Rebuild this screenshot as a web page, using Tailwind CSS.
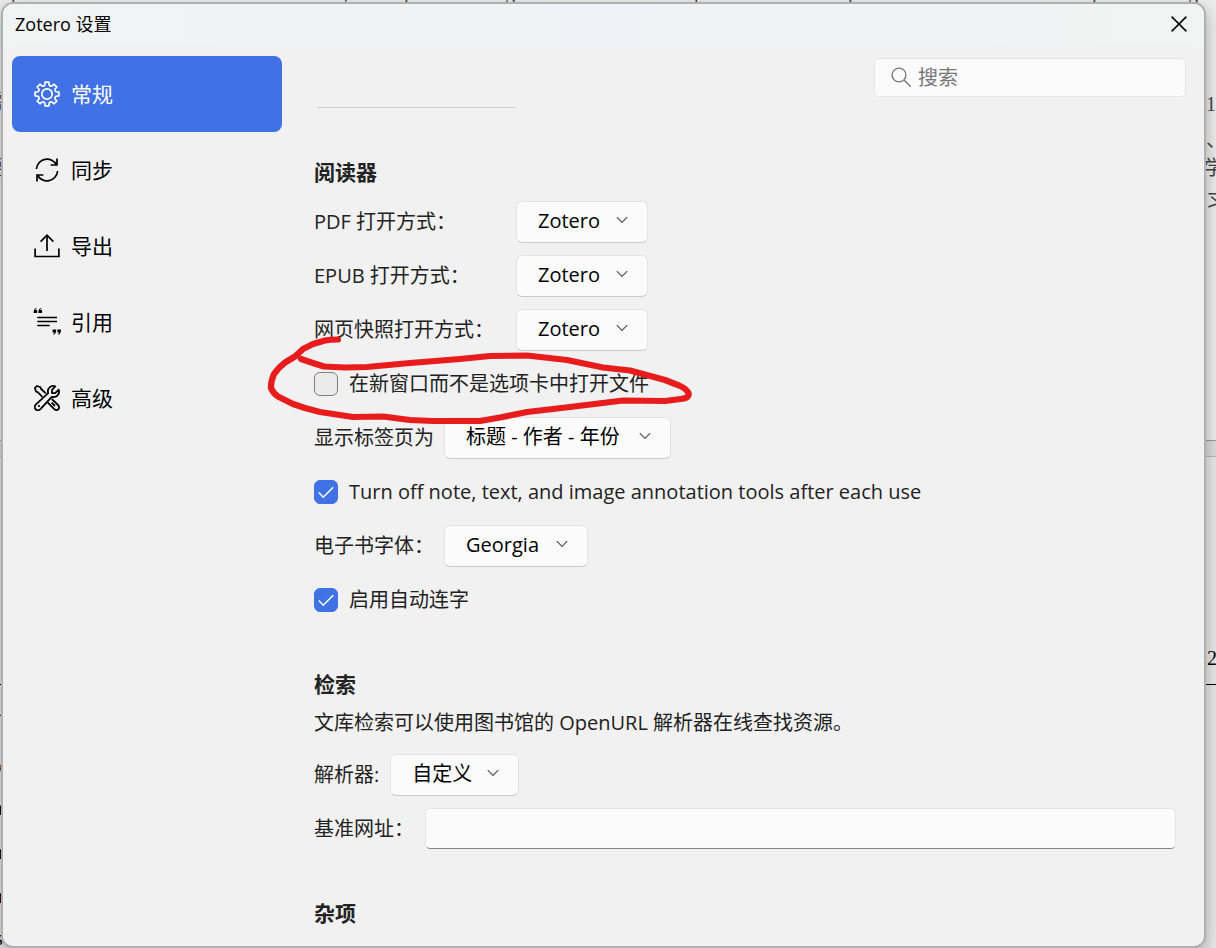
<!DOCTYPE html>
<html lang="zh-CN">
<head>
<meta charset="utf-8">
<meta name="viewport" content="width=device-width, initial-scale=1">
<title>Zotero 设置</title>
<script src="https://cdn.jsdelivr.net/npm/@tailwindcss/browser@4"></script>
</head>
<body class="relative h-screen overflow-hidden bg-[#e9e9e9] font-['Open_Sans','Noto_Sans_CJK_SC',sans-serif] text-[#222]">

<!-- Document pages behind the dialog -->
<div class="absolute inset-0 flex flex-col overflow-hidden font-['Liberation_Serif','Noto_Sans_CJK_SC',serif] text-xl leading-6 text-[#444]" aria-hidden="true">
  <div class="h-[441px] border-b border-[#999] bg-[#ececec]"></div>
  <div class="h-[15px] bg-[#dcdcdc]"></div>
  <div class="grow border-t border-[#bbb] bg-[#e8e8e8]"></div>
  <span class="absolute left-[11px] -top-[19px]">p</span>
  <span class="absolute left-[343px] -top-[19px]">,</span>
  <span class="absolute left-[404px] -top-[19px]">p</span>
  <span class="absolute left-[505px] -top-[19px]">g</span>
  <span class="absolute left-[694px] -top-[19px]">p</span>
  <span class="absolute left-[848px] -top-[19px]">p</span>
  <span class="absolute left-[1092px] -top-[19px]">p</span>
  <span class="absolute left-[1188px] -top-[19px]">g</span>
  <span class="absolute left-[1206px] top-[92px]">1</span>
  <span class="absolute left-[1206px] top-[128px]">、</span>
  <span class="absolute left-[1204px] top-[156px]">学</span>
  <span class="absolute left-[1206px] top-[190px]">习</span>
  <span class="absolute left-[1207px] top-[646px] text-black">2</span>
  <span class="absolute -left-[17px] top-[90px]">需</span>
  <span class="absolute -left-[17px] top-[156px]">要</span>
  <span class="absolute -left-[17px] top-[710px]">言</span>
  <span class="absolute -left-[7px] top-[756px] text-black">y</span>
  <span class="absolute -left-[6px] top-[796px] text-black">a</span>
  <span class="absolute -left-[7px] top-[840px] text-black">n</span>
  <span class="absolute -left-[7px] top-[884px] text-black">n</span>
  <span class="absolute -left-[5px] top-[926px] text-black">s</span>
  <div class="absolute inset-x-0 top-[684px] h-px bg-black"></div>
</div>

<div class="relative h-full pt-[2px] pr-[10px] pl-px">
  <div class="flex h-full flex-col overflow-hidden rounded-[12px] border-2 border-[#b0b0b0] bg-[#f1f1f1] shadow-[0_6px_16px_rgba(0,0,0,0.3)]">

    <header class="flex h-[43px] shrink-0 items-center justify-between bg-linear-to-r from-[#f1f4f3] via-[#f0f2f7] to-[#f1f4f2] pr-4 pb-[3px] pl-3 text-black">
      <h1 class="text-lg leading-6">Zotero 设置</h1>
      <button type="button" aria-label="关闭" class="grid size-[18px] place-items-center">
        <svg class="size-4" viewBox="0 0 16 16" fill="none" stroke="currentColor" stroke-width="1.5"><path d="M.6 .6 15.4 15.4M15.4 .6 .6 15.4"/></svg>
      </button>
    </header>

    <div class="flex min-h-0 grow">
      <nav class="flex w-[279px] shrink-0 flex-col pt-[9px] pl-[9px] text-[21px] leading-8 text-black">
        <a href="#general" aria-current="page" class="flex h-[76px] items-center gap-[11px] rounded-lg bg-[#4072e5] pl-[22px] text-white">
          <svg class="size-[26px] shrink-0" viewBox="-13 -13 26 26" fill="none" stroke="currentColor" stroke-width="1.7" stroke-linejoin="round"><path d="M-2.25-9-1.9-11.9H1.9L2.25-9Q3-7.5 4.77-7.95L7.07-9.76 9.76-7.07 7.95-4.77Q7.5-3 9-2.25L11.9-1.9V1.9L9 2.25Q7.5 3 7.95 4.77L9.76 7.07 7.07 9.76 4.77 7.95Q3 7.5 2.25 9L1.9 11.9H-1.9L-2.25 9Q-3 7.5-4.77 7.95L-7.07 9.76-9.76 7.07-7.95 4.77Q-7.5 3-9 2.25L-11.9 1.9V-1.9L-9-2.25Q-7.5-3-7.95-4.77L-9.76-7.07-7.07-9.76-4.77-7.95Q-3-7.5-2.25-9Z"/><circle r="5.2"/></svg>
          常规
        </a>
        <a href="#sync" class="flex h-[76px] items-center gap-[11px] pl-[22px]">
          <svg class="size-[26px] shrink-0" viewBox="-13 -13 26 26" fill="none" stroke="currentColor" stroke-width="1.7"><path d="M-10.6-1A10.7 10.7 0 0 1 9.6-5M10-11.4V-5H3.6M10.6 1A10.7 10.7 0 0 1-9.6 5M-10 11.4V5H-3.6"/></svg>
          同步
        </a>
        <a href="#export" class="flex h-[76px] items-center gap-[11px] pl-[22px]">
          <svg class="size-[26px] shrink-0" viewBox="-13 -13 26 26" fill="none" stroke="currentColor" stroke-width="1.7"><path d="M-11.9 2.6V10.5H11.9V2.6M0 5V-10.6M-6.4-4.4 0-10.8 6.4-4.4"/></svg>
          导出
        </a>
        <a href="#cite" class="flex h-[76px] items-center gap-[11px] pl-[22px]">
          <svg class="size-[26px] shrink-0 overflow-visible" viewBox="-13 -13 26 26" fill="none" stroke="currentColor" stroke-width="1.7"><path d="M-9.7-4.5H10M-9.7-.5H10M-9.7 3.5H2.7"/><path fill="currentColor" stroke="none" d="M-10.4-14.2C-12.6-13.6-13.4-12-13.4-9H-9.8V-12H-11.6Q-11.5-13.2-10.4-13.5ZM-5.6-14.2C-7.8-13.6-8.6-12-8.6-9H-5V-12H-6.8Q-6.7-13.2-5.6-13.5ZM6.2 12.8C8.4 12.2 9.2 10.6 9.2 7.4H5.6V10.4H7.4Q7.3 11.7 6.2 12.1ZM11 12.8C13.2 12.2 14 10.6 14 7.4H10.4V10.4H12.2Q12.1 11.7 11 12.1Z"/></svg>
          引用
        </a>
        <a href="#advanced" class="flex h-[76px] items-center gap-[11px] pl-[22px]">
          <svg class="size-[26px] shrink-0" viewBox="-13 -13 26 26" fill="none" stroke="currentColor" stroke-width="1.8" stroke-linejoin="round"><path d="M8.3-11.7C4-13.2-.3-9.5 1.2-4.8L-11.3 6.6C-12.7 8.2-12.4 10.3-11.3 11.3-10 12.6-7.8 12.4-6.6 11.2L4.8-1.2C9.5.3 13.2-4 11.7-8.3L8.2-4.8 5-5V-8.2Z"/><path d="M-4.6-1-9-5.6-11-6.6-12.1-10-10.2-12-6.8-11-5.8-9-1.2-4.6M.6 4.4 7 10.9C8.3 12.4 10.3 12.4 11.3 11.3 12.4 10.3 12.4 8.3 11 7L4.8 1M4.6 4.6 8 8"/><circle cx="-8" cy="8" r="1.1" fill="currentColor" stroke="none"/></svg>
          高级
        </a>
      </nav>

      <div class="flex min-w-0 grow flex-col">
        <div class="flex justify-end pt-[11px] pr-[18px]">
          <label class="flex h-[39px] w-[312px] items-center gap-[6px] rounded-[5px] border border-[#e5e5e5] bg-[#fbfbfb] px-4 text-[#777]">
            <svg class="size-[21px] shrink-0" viewBox="0 0 21 21" fill="none" stroke="currentColor" stroke-width="1.4"><circle cx="8" cy="8" r="6.9"/><path d="m13 13 6.8 6.8"/></svg>
            <input type="search" placeholder="搜索" aria-label="搜索" class="min-w-0 grow bg-transparent text-xl leading-7 outline-none placeholder:text-[#777]">
          </label>
        </div>

        <main class="flex flex-col pr-7 pl-8 text-xl leading-7">
          <hr class="mt-[10px] ml-[3px] w-[199px] border-[#cdcdcd]">

          <section class="mt-12">
            <h2 class="text-[21px] leading-8 font-bold">阅读器</h2>
            <div class="mt-[13px] flex flex-col gap-3">
              <div class="grid grid-cols-[202px_auto] items-center justify-start gap-y-3">
                <label for="pdf">PDF 打开方式：</label>
                <div class="grid w-[132px] items-center">
                  <select id="pdf" class="col-start-1 row-start-1 h-[42px] appearance-none rounded-md border border-[#e3e3e3] border-b-[#cacaca] bg-[#fbfbfb] pr-10 pb-[2px] pl-[21px] text-black"><option>Zotero</option></select>
                  <svg class="pointer-events-none col-start-1 row-start-1 mr-5 mb-1 h-2 w-3 justify-self-end" viewBox="0 0 12 8" fill="none" stroke="#555" stroke-width="1.2"><path d="M.8 1.2 6 6.4l5.200-5.200"/></svg>
                </div>
                <label for="epub">EPUB 打开方式：</label>
                <div class="grid w-[132px] items-center">
                  <select id="epub" class="col-start-1 row-start-1 h-[42px] appearance-none rounded-md border border-[#e3e3e3] border-b-[#cacaca] bg-[#fbfbfb] pr-10 pb-[2px] pl-[21px] text-black"><option>Zotero</option></select>
                  <svg class="pointer-events-none col-start-1 row-start-1 mr-5 mb-1 h-2 w-3 justify-self-end" viewBox="0 0 12 8" fill="none" stroke="#555" stroke-width="1.2"><path d="M.8 1.2 6 6.4l5.200-5.200"/></svg>
                </div>
                <label for="snapshot">网页快照打开方式：</label>
                <div class="grid w-[132px] items-center">
                  <select id="snapshot" class="col-start-1 row-start-1 h-[42px] appearance-none rounded-md border border-[#e3e3e3] border-b-[#cacaca] bg-[#fbfbfb] pr-10 pb-[2px] pl-[21px] text-black"><option>Zotero</option></select>
                  <svg class="pointer-events-none col-start-1 row-start-1 mr-5 mb-1 h-2 w-3 justify-self-end" viewBox="0 0 12 8" fill="none" stroke="#555" stroke-width="1.2"><path d="M.8 1.2 6 6.4l5.200-5.200"/></svg>
                </div>
              </div>

              <label class="flex h-[42px] items-center gap-[11px]">
                <input type="checkbox" class="size-6 shrink-0 appearance-none rounded-md border border-[#808080] bg-[#ebebeb]">
                在新窗口而不是选项卡中打开文件
              </label>

              <div class="grid grid-cols-[130px_auto] items-center justify-start">
                <label for="tab-title" class="whitespace-nowrap">显示标签页为</label>
                <div class="grid w-[227px] items-center">
                  <select id="tab-title" class="col-start-1 row-start-1 h-[42px] appearance-none rounded-md border border-[#e3e3e3] border-b-[#cacaca] bg-[#fbfbfb] pr-10 pb-[2px] pl-[21px] text-black"><option>标题 - 作者 - 年份</option></select>
                  <svg class="pointer-events-none col-start-1 row-start-1 mr-5 mb-1 h-2 w-3 justify-self-end" viewBox="0 0 12 8" fill="none" stroke="#555" stroke-width="1.2"><path d="M.8 1.2 6 6.4l5.200-5.200"/></svg>
                </div>
              </div>

              <label class="flex h-[42px] items-center gap-[11px]">
                <span class="grid size-6 shrink-0 place-items-center">
                  <input type="checkbox" checked class="peer col-start-1 row-start-1 size-6 appearance-none rounded-md border border-[#808080] bg-[#ebebeb] checked:border-[#4072e5] checked:bg-[#4072e5]">
                  <svg class="pointer-events-none invisible col-start-1 row-start-1 size-4 peer-checked:visible" viewBox="0 0 16 16" fill="none" stroke="#fff" stroke-width="1.5"><path d="m.8 8.600 4.400 4.600L15.200 3.200"/></svg>
                </span>
                Turn off note, text, and image annotation tools after each use
              </label>

              <div class="grid grid-cols-[130px_auto] items-center justify-start">
                <label for="ebook-font" class="whitespace-nowrap">电子书字体：</label>
                <div class="grid w-[144px] items-center">
                  <select id="ebook-font" class="col-start-1 row-start-1 h-[42px] appearance-none rounded-md border border-[#e3e3e3] border-b-[#cacaca] bg-[#fbfbfb] pr-10 pb-[2px] pl-[21px] text-black"><option>Georgia</option></select>
                  <svg class="pointer-events-none col-start-1 row-start-1 mr-5 mb-1 h-2 w-3 justify-self-end" viewBox="0 0 12 8" fill="none" stroke="#555" stroke-width="1.2"><path d="M.8 1.2 6 6.4l5.200-5.200"/></svg>
                </div>
              </div>

              <label class="flex h-[42px] items-center gap-[11px]">
                <span class="grid size-6 shrink-0 place-items-center">
                  <input type="checkbox" checked class="peer col-start-1 row-start-1 size-6 appearance-none rounded-md border border-[#808080] bg-[#ebebeb] checked:border-[#4072e5] checked:bg-[#4072e5]">
                  <svg class="pointer-events-none invisible col-start-1 row-start-1 size-4 peer-checked:visible" viewBox="0 0 16 16" fill="none" stroke="#fff" stroke-width="1.5"><path d="m.8 8.600 4.400 4.600L15.200 3.200"/></svg>
                </span>
                启用自动连字
              </label>
            </div>
          </section>

          <section class="mt-[47px]">
            <h2 class="text-[21px] leading-8 font-bold">检索</h2>
            <p class="mt-[9px]">文库检索可以使用图书馆的 OpenURL 解析器在线查找资源。</p>
            <div class="mt-[17px] flex items-center gap-[11px]">
              <label for="resolver">解析器:</label>
              <div class="grid w-[129px] items-center">
                <select id="resolver" class="col-start-1 row-start-1 h-[42px] appearance-none rounded-md border border-[#e3e3e3] border-b-[#cacaca] bg-[#fbfbfb] pr-10 pb-[2px] pl-[21px] text-black"><option>自定义</option></select>
                <svg class="pointer-events-none col-start-1 row-start-1 mr-5 mb-1 h-2 w-3 justify-self-end" viewBox="0 0 12 8" fill="none" stroke="#555" stroke-width="1.2"><path d="M.8 1.2 6 6.4l5.200-5.200"/></svg>
              </div>
            </div>
            <div class="mt-3 grid grid-cols-[111px_1fr] items-center">
              <label for="base-url">基准网址：</label>
              <input id="base-url" type="text" class="h-[41px] w-full rounded-[5px] border border-[#e5e5e5] border-b-[#858585] bg-[#fbfbfb] px-3 outline-none">
            </div>
          </section>

          <section class="mt-12">
            <h2 class="text-[21px] leading-8 font-bold">杂项</h2>
          </section>
        </main>
      </div>
    </div>
  </div>
</div>

<!-- Hand-drawn red ring around the "open in new window" option -->
<svg class="pointer-events-none absolute top-[330px] left-[260px] h-[100px] w-[440px]" viewBox="260 330 440 100" fill="none" stroke="#e81c1c" stroke-width="6.200" stroke-linecap="round" stroke-linejoin="round" aria-hidden="true"><path d="M338 339.500Q330 339.500 325 340.500L313 344 303 349 295 356.500 285 362.500Q278 368 274 374 270.500 382 271 388 273 393 278 396.500L293 404 305 408 320 412 353 417 383 416.500 410 420 433 421H480L500 417.500 527 412 570 407 623 400.500 665 401 681 399Q690 398 688.500 393 686 388.500 679 385.500L665 380 630 370.500 603 367.500 567 360 527 355.500 490 356 460 359 410 363 367 367 345 367.500 324 366.500 313 363 301 359"/></svg>
</body>
</html>
